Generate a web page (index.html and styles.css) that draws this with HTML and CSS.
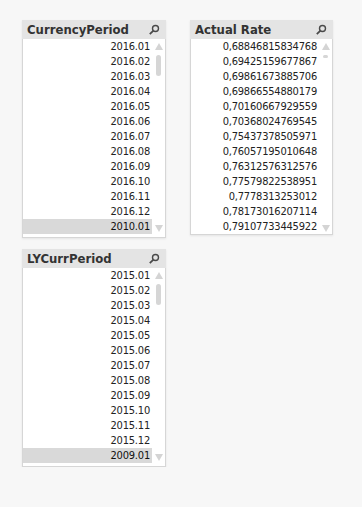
FILE: index.html
```html
<!DOCTYPE html>
<html lang="en">
<head>
    <meta charset="UTF-8">
    <title>List boxes</title>
    <link rel="stylesheet" href="styles.css">
</head>
<body>
    <div class="sheet">
        <div class="row">
            <div class="listbox period">
                <div class="lb-head">
                    <span class="lb-title">CurrencyPeriod</span>
                    <svg class="search" width="12" height="12" viewBox="0 0 12 12"><circle cx="7.5" cy="4.5" r="3" fill="none" stroke="#4a4a4a" stroke-width="1.4"/><line x1="5.4" y1="6.6" x2="1.8" y2="10.2" stroke="#4a4a4a" stroke-width="1.8"/></svg>
                </div>
                <div class="lb-body">
                    <ul class="lb-items">
                        <li>2016.01</li>
                        <li>2016.02</li>
                        <li>2016.03</li>
                        <li>2016.04</li>
                        <li>2016.05</li>
                        <li>2016.06</li>
                        <li>2016.07</li>
                        <li>2016.08</li>
                        <li>2016.09</li>
                        <li>2016.10</li>
                        <li>2016.11</li>
                        <li>2016.12</li>
                        <li class="selected">2010.01</li>
                    </ul>
                    <div class="scroll">
                        <span class="arrow up"></span>
                        <span class="thumb"></span>
                        <span class="arrow down"></span>
                    </div>
                </div>
            </div>

            <div class="listbox rate">
                <div class="lb-head">
                    <span class="lb-title">Actual Rate</span>
                    <svg class="search" width="12" height="12" viewBox="0 0 12 12"><circle cx="7.5" cy="4.5" r="3" fill="none" stroke="#4a4a4a" stroke-width="1.4"/><line x1="5.4" y1="6.6" x2="1.8" y2="10.2" stroke="#4a4a4a" stroke-width="1.8"/></svg>
                </div>
                <div class="lb-body">
                    <ul class="lb-items">
                        <li>0,68846815834768</li>
                        <li>0,69425159677867</li>
                        <li>0,69861673885706</li>
                        <li>0,69866554880179</li>
                        <li>0,70160667929559</li>
                        <li>0,70368024769545</li>
                        <li>0,75437378505971</li>
                        <li>0,76057195010648</li>
                        <li>0,76312576312576</li>
                        <li>0,77579822538951</li>
                        <li>0,7778313253012</li>
                        <li>0,78173016207114</li>
                        <li>0,79107733445922</li>
                    </ul>
                    <div class="scroll">
                        <span class="arrow up"></span>
                        <span class="thumb small"></span>
                        <span class="arrow down"></span>
                    </div>
                </div>
            </div>
        </div>

        <div class="row">
            <div class="listbox period">
                <div class="lb-head">
                    <span class="lb-title">LYCurrPeriod</span>
                    <svg class="search" width="12" height="12" viewBox="0 0 12 12"><circle cx="7.5" cy="4.5" r="3" fill="none" stroke="#4a4a4a" stroke-width="1.4"/><line x1="5.4" y1="6.6" x2="1.8" y2="10.2" stroke="#4a4a4a" stroke-width="1.8"/></svg>
                </div>
                <div class="lb-body">
                    <ul class="lb-items">
                        <li>2015.01</li>
                        <li>2015.02</li>
                        <li>2015.03</li>
                        <li>2015.04</li>
                        <li>2015.05</li>
                        <li>2015.06</li>
                        <li>2015.07</li>
                        <li>2015.08</li>
                        <li>2015.09</li>
                        <li>2015.10</li>
                        <li>2015.11</li>
                        <li>2015.12</li>
                        <li class="selected">2009.01</li>
                    </ul>
                    <div class="scroll">
                        <span class="arrow up"></span>
                        <span class="thumb"></span>
                        <span class="arrow down"></span>
                    </div>
                </div>
            </div>
        </div>
    </div>
</body>
</html>
```

FILE: styles.css
```css
body {
    margin: 0;
    background: #f7f7f7;
    font-family: 'DejaVu Sans Condensed', 'DejaVu Sans', sans-serif;
    color: #333;
}
.sheet {
    padding: 20px 0 0 22px;
    display: flex;
    flex-direction: column;
    gap: 11px;
}
.row {
    display: flex;
    gap: 24px;
    align-items: flex-start;
}
.listbox {
    background: #fff;
    border: 1px solid #d6d6d6;
    border-top: none;
    box-shadow: 0 1px 2px rgba(0, 0, 0, 0.08);
}
.period {
    width: 142px;
}
.rate {
    width: 141px;
}
.lb-head {
    height: 19px;
    background: #e4e4e4;
    margin: 0 -1px;
    display: flex;
    align-items: center;
    justify-content: space-between;
    padding: 0 6px 0 5px;
}
.lb-title {
    font-weight: bold;
    font-size: 13px;
    color: #333;
}
.search {
    display: block;
}
.lb-body {
    display: flex;
    padding-bottom: 3px;
}
.rate .lb-body {
    padding-bottom: 0;
}
.lb-items {
    list-style: none;
    margin: 0;
    padding: 0;
    flex: 1;
}
.lb-items li {
    height: 15px;
    line-height: 15px;
    font-size: 11px;
    letter-spacing: -0.2px;
    text-align: right;
    padding-right: 2px;
    color: #222;
}
.lb-items li.selected {
    background: #d9d9d9;
    color: #111;
}
.scroll {
    width: 13px;
    position: relative;
}
.arrow {
    position: absolute;
    left: 3px;
    width: 0;
    height: 0;
    border-left: 4px solid transparent;
    border-right: 4px solid transparent;
}
.arrow.up {
    top: 4px;
    border-bottom: 7px solid #d4d4d4;
}
.arrow.down {
    bottom: 2px;
    border-top: 7px solid #d4d4d4;
}
.thumb {
    position: absolute;
    left: 4px;
    top: 16px;
    width: 5px;
    height: 21px;
    border-radius: 3px;
    background: #d6d6d6;
}
.thumb.small {
    height: 3px;
    top: 16px;
}
```
